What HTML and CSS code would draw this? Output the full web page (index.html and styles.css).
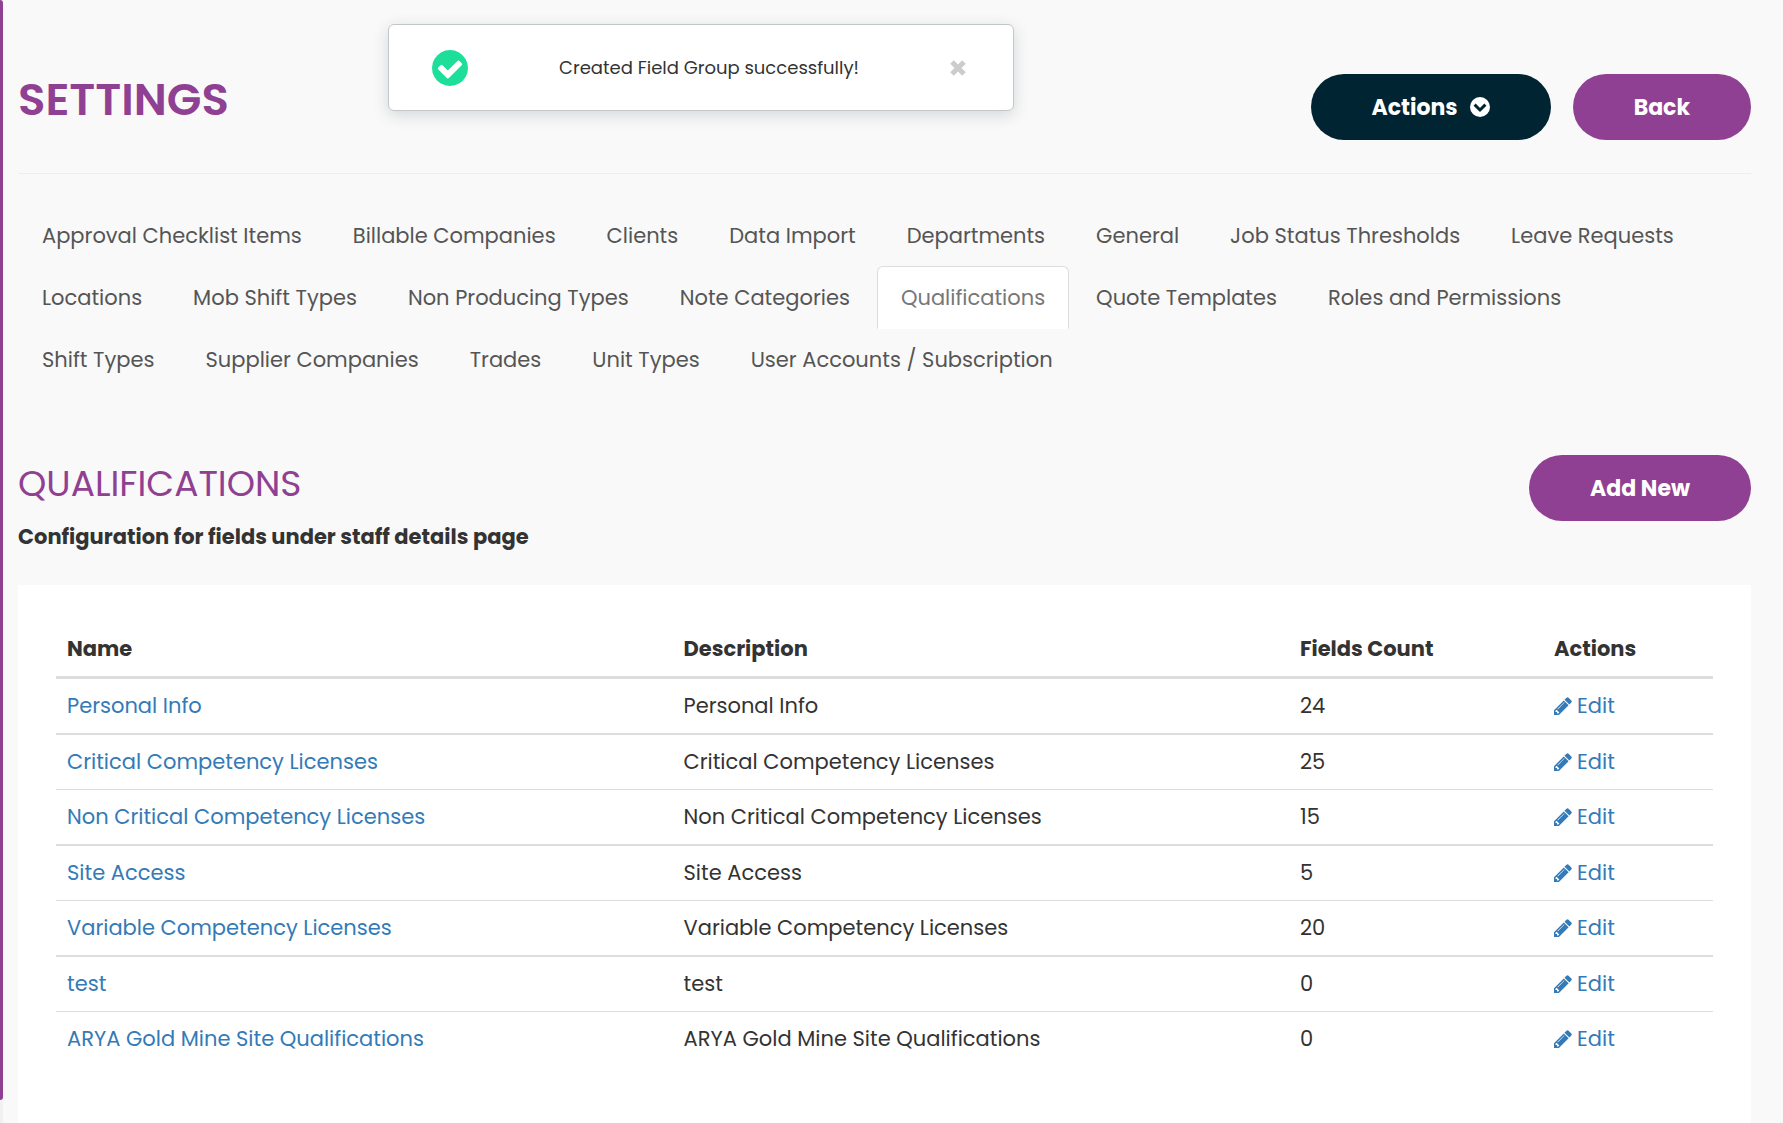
FILE: index.html
```html
<!DOCTYPE html>
<html lang="en">
<head>
	<meta charset="UTF-8">
	<title>Settings - Qualifications</title>
	<link rel="stylesheet" href="styles.css">
</head>
<body>
<svg class="hide">
    <symbol id="icon-pencil" viewBox="0 128 1536 1536">
        <path fill="currentColor" d="M363 1536l91-91-235-235-91 91v107h128v128h107zm523-928q0-22-22-22-10 0-17 7l-542 542q-7 7-7 17 0 22 22 22 10 0 17-7l542-542q7-7 7-17zm-54-192l416 416-832 832h-416v-416zm683 96q0 53-37 90l-166 166-416-416 166-165q36-38 90-38 53 0 91 38l235 234q37 39 37 91z"/>
    </symbol>
</svg>
<div class="side-strip"><span></span></div>
<div class="toast" role="alert">
    <svg class="toast-icon" viewBox="128 128 1536 1536">
        <path fill="#1ddf99" d="M1412 734q0-28-18-46l-91-90q-19-19-45-19t-45 19l-408 407-226-226q-19-19-45-19t-45 19l-91 90q-18 18-18 46 0 27 18 45l362 362q19 19 45 19 27 0 46-19l543-543q18-18 18-45zm252 162q0 209-103 385.500t-279.500 279.500-385.500 103-385.500-103-279.500-279.500-103-385.500 103-385.500 279.500-279.500 385.500-103 385.500 103 279.500 279.500 103 385.500z"/>
    </svg>
    <p>Created Field Group successfully!</p>
    <button type="button" class="toast-close" aria-label="Close">
        <svg viewBox="0 0 16 16"><path fill="none" stroke="#ccc" stroke-width="5" d="M2 2 14 14M14 2 2 14"/></svg>
    </button>
</div>
<div id="wrapper">
    <div class="page-header">
        <h1>SETTINGS</h1>
        <div class="btn-group">
            <button type="button" class="btn btn-dark">
                <span>Actions</span>
                <svg class="btn-icon" viewBox="0 0 20 20">
                    <circle cx="10" cy="10" r="10" fill="#fff"/>
                    <path fill="none" stroke="#002432" stroke-width="3" d="M4.6 7.6 10 13 15.4 7.6"/>
                </svg>
            </button>
            <button type="button" class="btn">Back</button>
        </div>
    </div>
    <ul class="nav-tabs">
        <li><a href="#">Approval Checklist Items</a></li>
        <li><a href="#">Billable Companies</a></li>
        <li><a href="#">Clients</a></li>
        <li><a href="#">Data Import</a></li>
        <li><a href="#">Departments</a></li>
        <li><a href="#">General</a></li>
        <li><a href="#">Job Status Thresholds</a></li>
        <li><a href="#">Leave Requests</a></li>
        <li><a href="#">Locations</a></li>
        <li><a href="#">Mob Shift Types</a></li>
        <li><a href="#">Non Producing Types</a></li>
        <li><a href="#">Note Categories</a></li>
        <li class="active"><a href="#">Qualifications</a></li>
        <li><a href="#">Quote Templates</a></li>
        <li><a href="#">Roles and Permissions</a></li>
        <li><a href="#">Shift Types</a></li>
        <li><a href="#">Supplier Companies</a></li>
        <li><a href="#">Trades</a></li>
        <li><a href="#">Unit Types</a></li>
        <li><a href="#">User Accounts / Subscription</a></li>
    </ul>
    <div class="section-header">
        <div>
            <h2>QUALIFICATIONS</h2>
            <p>Configuration for fields under staff details page</p>
        </div>
        <button type="button" class="btn">Add New</button>
    </div>
    <div class="panel">
        <table class="table">
            <thead>
                <tr>
                    <th>Name</th>
                    <th>Description</th>
                    <th class="col-count">Fields Count</th>
                    <th class="col-actions">Actions</th>
                </tr>
            </thead>
            <tbody>
                <tr>
                    <td><a href="#">Personal Info</a></td>
                    <td>Personal Info</td>
                    <td>24</td>
                    <td><a href="#"><svg class="icon"><use href="#icon-pencil"/></svg>Edit</a></td>
                </tr>
                <tr>
                    <td><a href="#">Critical Competency Licenses</a></td>
                    <td>Critical Competency Licenses</td>
                    <td>25</td>
                    <td><a href="#"><svg class="icon"><use href="#icon-pencil"/></svg>Edit</a></td>
                </tr>
                <tr>
                    <td><a href="#">Non Critical Competency Licenses</a></td>
                    <td>Non Critical Competency Licenses</td>
                    <td>15</td>
                    <td><a href="#"><svg class="icon"><use href="#icon-pencil"/></svg>Edit</a></td>
                </tr>
                <tr>
                    <td><a href="#">Site Access</a></td>
                    <td>Site Access</td>
                    <td>5</td>
                    <td><a href="#"><svg class="icon"><use href="#icon-pencil"/></svg>Edit</a></td>
                </tr>
                <tr>
                    <td><a href="#">Variable Competency Licenses</a></td>
                    <td>Variable Competency Licenses</td>
                    <td>20</td>
                    <td><a href="#"><svg class="icon"><use href="#icon-pencil"/></svg>Edit</a></td>
                </tr>
                <tr>
                    <td><a href="#">test</a></td>
                    <td>test</td>
                    <td>0</td>
                    <td><a href="#"><svg class="icon"><use href="#icon-pencil"/></svg>Edit</a></td>
                </tr>
                <tr>
                    <td><a href="#">ARYA Gold Mine Site Qualifications</a></td>
                    <td>ARYA Gold Mine Site Qualifications</td>
                    <td>0</td>
                    <td><a href="#"><svg class="icon"><use href="#icon-pencil"/></svg>Edit</a></td>
                </tr>
            </tbody>
        </table>
    </div>
</div>
</body>
</html>
```
FILE: styles.css
```css
*{
    box-sizing: border-box;
}
body,h1,h2,p,ul,li,th,td,button{
    margin: 0;
    padding: 0;
}
body{
    min-height: 100vh;
    display: flex;
    background: #f9f9f9;
    color: #333;
    font-family: Poppins, Inter, "Open Sans", sans-serif;
    font-size: 21px;
    font-weight: 400;
    line-height: 30px;
}
a{
    color: #337ab7;
    text-decoration: none;
}
ul{
    list-style: none;
}
button{
    border: none;
    font-family: inherit;
    cursor: pointer;
}
.hide{
    display: none;
}
.side-strip{
    width: 3px;
    padding-bottom: 23px;
    background: #f1f1f1;
    display: flex;
}
.side-strip span{
    flex: 1;
    background: #904092;
    border-radius: 0 3px 3px 0;
}
#wrapper{
    flex: 1;
    display: flex;
    flex-direction: column;
    padding: 74px 32px 0 15px;
}

/* toast */
.toast{
    position: absolute;
    top: 24px;
    left: 388px;
    width: 626px;
    height: 87px;
    padding: 0 47px 0 43px;
    display: flex;
    align-items: center;
    justify-content: space-between;
    background: #fff;
    border: 1px solid #c3c7ca;
    border-radius: 6px;
    box-shadow: 0 4px 16px rgba(0,36,50,.16);
}
.toast p{
    font-size: 18px;
}
.toast-icon{
    width: 36px;
    height: 36px;
}
.toast-close{
    width: 16px;
    height: 16px;
    background: none;
}
.toast-close svg{
    display: block;
}

/* header */
.page-header{
    display: flex;
    justify-content: space-between;
    align-items: flex-start;
    padding-bottom: 33px;
    border-bottom: 1px solid #eee;
}
h1{
    color: #904092;
    font-size: 45px;
    font-weight: 600;
    line-height: 52px;
}
.btn-group{
    display: flex;
    gap: 22px;
}
.btn{
    height: 66px;
    padding: 0 61px;
    display: flex;
    align-items: center;
    gap: 12px;
    border-radius: 33px;
    background: #904092;
    color: #fff;
    font-size: 22px;
    font-weight: 700;
}
.btn-dark{
    background: #002432;
}
.btn-icon{
    width: 20px;
    height: 20px;
}

/* tabs */
.nav-tabs{
    display: flex;
    flex-wrap: wrap;
    margin-top: 30px;
}
.nav-tabs li{
    margin: 0 3px -1px 0;
}
.nav-tabs a{
    display: block;
    height: 63px;
    padding: 0 23px;
    line-height: 61px;
    color: #555;
    border: 1px solid transparent;
    border-radius: 6px 6px 0 0;
}
.nav-tabs .active a{
    color: #777;
    background: #fff;
    border-color: #ddd;
    border-bottom-color: #fff;
}

/* section */
.section-header{
    display: flex;
    justify-content: space-between;
    align-items: flex-start;
    margin: 65px 0 33px;
}
h2{
    color: #904092;
    font-size: 36px;
    font-weight: 400;
    line-height: 58px;
}
.section-header p{
    margin-top: 9px;
    font-weight: 700;
}
.panel{
    flex: 1;
    padding: 37px 38px;
    background: #fff;
}
.table{
    width: 100%;
    table-layout: fixed;
    border-spacing: 0;
}
.table th,
.table td{
    padding: 12px 11px;
    text-align: left;
}
.table th{
    font-weight: 700;
    border-bottom: 3px solid #ddd;
}
.table td{
    border-top: 1px solid #ddd;
}
.table tr:nth-child(even) td{
    border-top-width: 2px;
}
.table tbody tr:first-child td{
    border-top: none;
}
.table .col-count{
    width: 254px;
}
.table .col-actions{
    width: 170px;
}
.icon{
    width: 18px;
    height: 18px;
    margin-right: 5px;
    vertical-align: -2px;
}
```
